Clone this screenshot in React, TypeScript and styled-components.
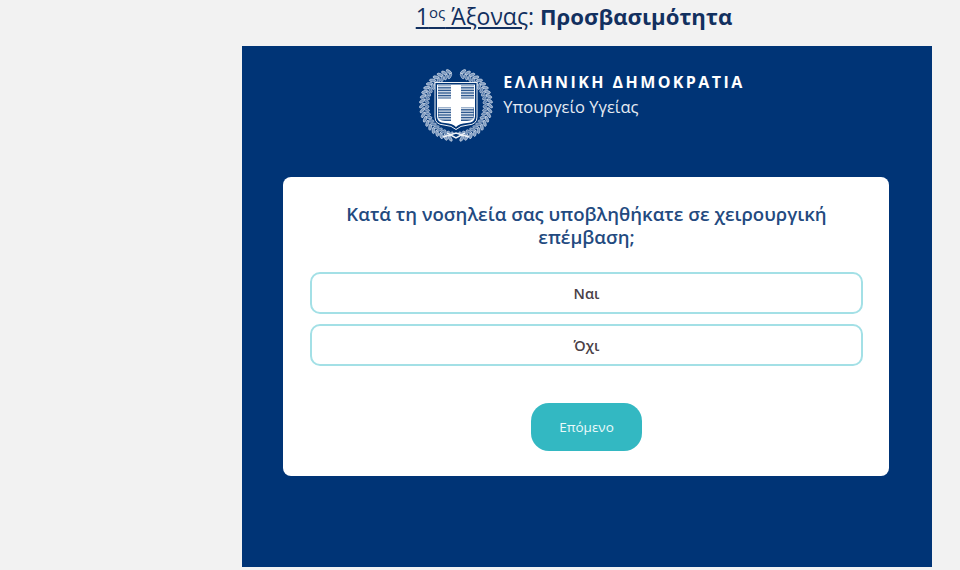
import styled, { createGlobalStyle } from 'styled-components';

const GlobalStyle = createGlobalStyle`
  html, body {
    margin: 0;
    height: 100%;
    background: #f2f2f2;
  }
  body {
    font-family: 'Open Sans', 'Noto Sans', sans-serif;
  }
`;

// leaves run down each side of the wreath, from the gap at the top to the knot at the bottom
const LEAF_ANGLES = Array.from({ length: 21 }, (_, i) => 12 + i * 7.9);
const STRIPES = [0, 2.6, 5.2, 7.8, 10.4];

function Branch({ mirrored }: { mirrored?: boolean }) {
  return (
    <g transform={mirrored ? 'translate(76 0) scale(-1 1)' : undefined}>
      {LEAF_ANGLES.map((angle) => (
        <g key={angle} transform={`rotate(${angle} 38 38)`} stroke="#e6ecf4" strokeWidth="0.55">
          <ellipse cx="38" cy="4" rx="1.4" ry="3.2" fill="#7f9bc0" transform="rotate(42 38 4)" />
          <ellipse cx="38" cy="8.4" rx="1.3" ry="3" fill="#5f82b0" transform="rotate(-38 38 8.4)" />
        </g>
      ))}
    </g>
  );
}

function Emblem() {
  return (
    <EmblemSvg viewBox="0 0 76 76" aria-hidden="true">
      <Branch />
      <Branch mirrored />
      {/* ribbon at the bottom */}
      <path d="M25 70 L38 66 L51 70 M29 66 L38 71 L47 66" fill="none" stroke="#eef2f7" strokeWidth="1.5" />
      {/* shield */}
      <path
        d="M17 15.5 H59 V50 Q59 57.5 50 58 Q42 58.5 38 62.5 Q34 58.5 26 58 Q17 57.5 17 50 Z"
        fill="#003476"
        stroke="#eef2f7"
        strokeWidth="1"
      />
      <path
        d="M19 17.5 H57 V49.5 Q57 55.5 49 56 Q41 56.5 38 60 Q35 56.5 27 56 Q19 55.5 19 49.5 Z"
        fill="#ffffff"
      />
      {/* striped quarters */}
      <g fill="#2f5a90">
        <rect x="20" y="18.5" width="13" height="13" />
        <rect x="43" y="18.5" width="13" height="13" />
        <path d="M20 40.5 H33 V54 H27 Q20 53.5 20 49 Z" />
        <path d="M43 40.5 H56 V49 Q56 53.5 49 54 H43 Z" />
      </g>
      <g stroke="#d4deea" strokeWidth="1.3">
        {STRIPES.map((offset) => (
          <g key={offset}>
            <line x1="20" x2="33" y1={19.5 + offset} y2={19.5 + offset} />
            <line x1="43" x2="56" y1={19.5 + offset} y2={19.5 + offset} />
            <line x1="20.5" x2="33" y1={41.5 + offset} y2={41.5 + offset} />
            <line x1="43" x2="55.5" y1={41.5 + offset} y2={41.5 + offset} />
          </g>
        ))}
      </g>
    </EmblemSvg>
  );
}

export default function App() {
  return (
    <Page>
      <GlobalStyle />
      <Title>
        <u>
          1<sup>ος</sup> Άξονας
        </u>
        : <b>Προσβασιμότητα</b>
      </Title>
      <Panel>
        <Brand>
          <Emblem />
          <BrandText>
            <Republic>ΕΛΛΗΝΙΚΗ ΔΗΜΟΚΡΑΤΙΑ</Republic>
            <Ministry>Υπουργείο Υγείας</Ministry>
          </BrandText>
        </Brand>
        <Card>
          <Question>Κατά τη νοσηλεία σας υποβληθήκατε σε χειρουργική επέμβαση;</Question>
          <Options>
            <Option>Ναι</Option>
            <Option>Όχι</Option>
          </Options>
          <NextButton>Επόμενο</NextButton>
        </Card>
      </Panel>
    </Page>
  );
}

const Page = styled.div`
  width: 960px;
  height: 570px;
  overflow: hidden;
  padding-left: 242px;
  box-sizing: border-box;
`;

const Title = styled.h1`
  width: 664px;
  height: 46px;
  margin: 0;
  text-align: center;
  font-family: 'Open Sans', sans-serif;
  font-size: 23px;
  font-weight: 400;
  line-height: 33px;
  color: #12305f;

  sup {
    font-size: 15px;
    line-height: 0;
    vertical-align: 7px;
  }

  b {
    font-size: 22.2px;
    font-weight: 700;
  }
`;

const Panel = styled.section`
  width: 690px;
  height: 521px;
  background: #003476;
  padding: 21px 43px 0 41px;
  box-sizing: border-box;
`;

const Brand = styled.div`
  height: 110px;
  display: flex;
  align-items: flex-start;
  justify-content: center;
  gap: 9px;
  padding-right: 9px;
`;

const EmblemSvg = styled.svg`
  width: 76px;
  height: 76px;
  flex: none;
  filter: blur(0.4px);
`;

const BrandText = styled.div`
  display: flex;
  flex-direction: column;
  padding-top: 4px;
  color: #fff;
`;

const Republic = styled.div`
  font-size: 16px;
  font-weight: 700;
  letter-spacing: 2.43px;
  line-height: 22px;
  white-space: nowrap;
`;

const Ministry = styled.div`
  font-size: 16.5px;
  line-height: 28px;
  font-weight: 400;
  color: #e6ebf3;
`;

const Card = styled.div`
  height: 299px;
  background: #fff;
  border-radius: 8px;
  padding: 25px 26px 0 27px;
  box-sizing: border-box;
  display: flex;
  flex-direction: column;
  align-items: center;
`;

const Question = styled.h2`
  width: 500px;
  margin: 0;
  text-align: center;
  font-family: 'Open Sans', sans-serif;
  font-size: 18.6px;
  font-weight: 600;
  line-height: 23px;
  color: #234a7f;
`;

const Options = styled.div`
  width: 100%;
  margin-top: 24px;
  display: flex;
  flex-direction: column;
  gap: 10px;
`;

const Option = styled.button`
  height: 42px;
  width: 100%;
  background: #fff;
  border: 2px solid #a3e0e6;
  border-radius: 10px;
  font-family: 'Open Sans', sans-serif;
  font-size: 14.5px;
  font-weight: 600;
  color: #4a3f47;
  padding: 0;
`;

const NextButton = styled.button`
  width: 111px;
  height: 48px;
  margin-top: 37px;
  background: #33b8c2;
  border: none;
  border-radius: 18px;
  font-family: 'Open Sans', sans-serif;
  font-size: 13.5px;
  font-weight: 500;
  color: #eafafb;
  padding: 0;
`;
